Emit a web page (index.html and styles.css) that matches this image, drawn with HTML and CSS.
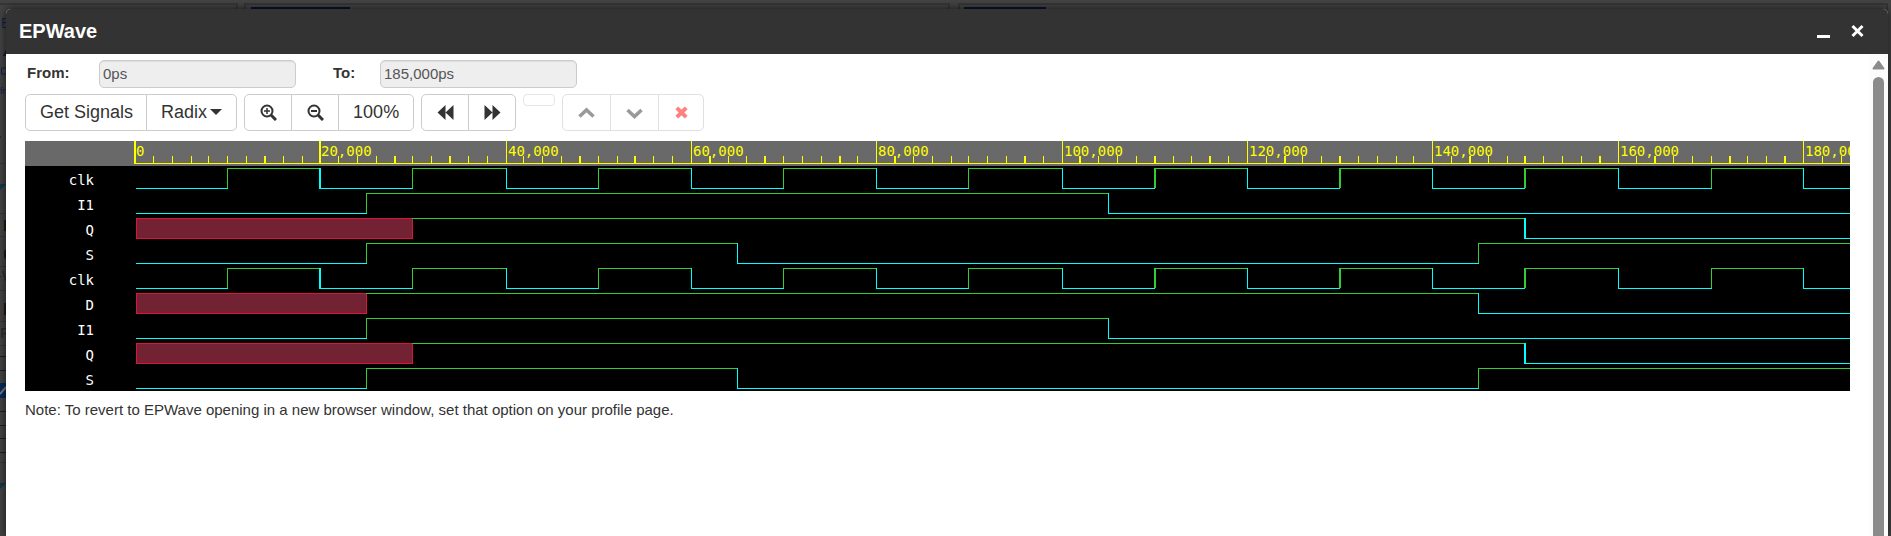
FILE: index.html
```
<!DOCTYPE html>
<html lang="en">
<head>
<meta charset="utf-8">
<title>EPWave</title>
<link rel="stylesheet" href="styles.css">
</head>
<body>
<svg class="backdrop" aria-hidden="true">
  <rect class="pane" x="-2" y="4" width="239" height="600"/>
  <rect class="pane" x="245" y="4" width="704" height="600"/>
  <rect class="pane" x="959" y="4" width="928" height="600"/>
  <path class="navy" d="M251 8h99M964 8h82"/>
  <text class="ink" x="1" y="28" font-size="14">E</text>
  <path class="inkfill" d="M3 56l4-8v8z"/>
  <path class="inkline" d="M6 68H1.500v6H6"/>
  <text class="ink" x="0" y="94" font-size="9">fr</text>
  <path class="teal" d="M0 136h1v2h-1zM0 184h6l-6 6zM0 483h6l-6 6z"/>
  <path class="rule" d="M0 163.500h6M0 213.500h6M0 236.500h6M0 266.500h6M0 290.500h6M0 321.500h6M0 345.500h6M0 462.500h6"/>
  <path class="rule dark" d="M0 356.500h6M0 370.500h6M0 411.500h6M0 425.500h6M0 438.500h6M0 452.500h6"/>
  <path class="brown" d="M4 220h2v11h-2zM4 251l2-2v11l-2-3zM4 303h2v12h-2z"/>
  <text class="grey" x="-3" y="281" font-size="15">-W</text>
  <text class="grey" x="0" y="338" font-size="15">F</text>
  <rect class="blue" x="0" y="383" width="6" height="15"/>
  <path class="tick" d="M0 394l6-7"/>
</svg>

<main class="window">
  <header class="titlebar">
    <h1 class="title">EPWave</h1>
    <button class="winbtn" type="button" aria-label="Minimize"><svg width="13" height="14" viewBox="0 0 13 14"><path d="M0 12.500h13" stroke-width="3"/></svg></button>
    <button class="winbtn" type="button" aria-label="Close"><svg width="13" height="14" viewBox="0 0 13 14"><path d="M1.500 2l10 10M11.500 2l-10 10" stroke-width="3"/></svg></button>
  </header>
  <div class="body">
    <div class="content">
      <form class="range">
        <label class="range-label" for="from">From:</label>
        <input class="range-input" id="from" type="text" value="0ps" disabled>
        <label class="range-label to" for="to">To:</label>
        <input class="range-input" id="to" type="text" value="185,000ps" disabled>
      </form>
      <div class="toolbar">
        <div class="group text">
          <button type="button" class="btn signals">Get Signals</button>
          <button type="button" class="btn">Radix<span class="caret"></span></button>
        </div>
        <div class="group text">
          <button type="button" class="btn" aria-label="Zoom in"><svg width="17" height="17" viewBox="0 0 17 17"><circle cx="7" cy="7" r="5.500"/><path d="M11 11l5 5" stroke-width="3"/><path d="M4 7h6M7 4v6" stroke-width="1.500"/></svg></button>
          <button type="button" class="btn" aria-label="Zoom out"><svg width="17" height="17" viewBox="0 0 17 17"><circle cx="7" cy="7" r="5.500"/><path d="M11 11l5 5" stroke-width="3"/><path d="M4 7h6"/></svg></button>
          <button type="button" class="btn">100%</button>
        </div>
        <div class="group">
          <button type="button" class="btn" aria-label="Scroll left"><svg width="17" height="17" viewBox="0 0 17 17"><path class="solid" d="M0.500 8.500L8.500 1v15zM8.500 8.500L16.500 1v15z"/></svg></button>
          <button type="button" class="btn" aria-label="Scroll right"><svg width="17" height="17" viewBox="0 0 17 17"><path class="solid" d="M16.500 8.500L8.500 1v15zM8.500 8.500L0.500 1v15z"/></svg></button>
        </div>
        <button type="button" class="btn blank" aria-label="Signal" disabled></button>
        <div class="group edit">
          <button type="button" class="btn" aria-label="Move up" disabled><svg width="17" height="17" viewBox="0 0 17 17"><path d="M1.500 12.500l7-6.500 7 6.500" stroke-width="3.500"/></svg></button>
          <button type="button" class="btn" aria-label="Move down" disabled><svg width="17" height="17" viewBox="0 0 17 17"><path d="M1.500 6l7 6.500 7-6.500" stroke-width="3.500"/></svg></button>
          <button type="button" class="btn" aria-label="Remove" disabled><svg class="red" width="13" height="13" viewBox="0 0 13 13"><path d="M1.800 1.800l9.400 9.400M11.200 1.800l-9.400 9.400" stroke-width="4"/></svg></button>
        </div>
      </div>
      <section class="viewer" aria-label="Waveforms">
        <ul class="names" id="names"></ul>
        <svg class="ruler" id="ruler"></svg>
        <svg class="waves" id="waves"></svg>
      </section>
      <p class="note">Note: To revert to EPWave opening in a new browser window, set that option on your profile page.</p>
    </div>
    <div class="scrollbar" aria-hidden="true">
      <svg width="13" height="10" viewBox="0 0 13 10"><path d="M6.500 1.500l5 7h-10z"/></svg>
      <div class="thumb"></div>
    </div>
  </div>
</main>
<script src="wave.js"></script>
</body>
</html>
```

FILE: styles.css
```
* { box-sizing: border-box; }

body {
  margin: 0;
  min-height: 100vh;
  display: flex;
  overflow: hidden;
  background: #434343;
  color: #333;
  font: 15px/20px "Liberation Sans", Arial, sans-serif;
}

.backdrop { position: absolute; top: 0; left: 0; width: 100%; height: 100%; }
.pane { fill: none; stroke: #363636; stroke-width: 2; }
.navy { stroke: #0a1330; stroke-width: 2; }
.ink { fill: #14204a; }
.inkfill { fill: #10183c; }
.inkline { fill: none; stroke: #14204a; }
.teal { fill: #12384a; }
.rule { stroke: #353535; }
.rule.dark { stroke: #1e1e1e; }
.brown { fill: #2a1a0c; }
.grey { fill: #262c34; }
.blue { fill: #052a5c; }
.tick { stroke: #777; stroke-width: 2; }

.window {
  position: relative;
  flex: 1;
  display: flex;
  flex-direction: column;
  margin: 9px 3px 0 6px;
  background: #fff;
  border-radius: 5px 5px 0 0;
  box-shadow: 0 0 8px #000000b0;
}

.titlebar {
  display: flex;
  align-items: center;
  gap: 21px;
  height: 45px;
  padding: 0 24px 2px 13px;
  background: #333;
  border-radius: 5px 5px 0 0;
}
.title { flex: 1; margin: 0; color: #fff; font-size: 20px; line-height: 24px; }
.winbtn { display: flex; padding: 0; border: 0; background: none; }
.winbtn svg { stroke: #fff; fill: none; }

.body { flex: 1; display: flex; }
.content { flex: 1; min-width: 0; padding: 6px 19px 0; }

.range { display: flex; align-items: center; height: 28px; }
.range-label { width: 74px; padding: 0 0 3px 2px; font-weight: bold; }
.range-label.to { width: 47px; margin-left: 37px; padding-left: 0; }
.range-input {
  width: 197px;
  height: 28px;
  padding: 0 3px 2px;
  border: 1px solid #ccc;
  border-radius: 5px;
  background: #eee;
  box-shadow: inset 0 1px 1px #00000013;
  color: #555;
  font: inherit;
}

.toolbar { display: flex; align-items: flex-start; gap: 7px; margin-top: 6px; }
.btn {
  display: flex;
  align-items: center;
  justify-content: center;
  height: 37px;
  padding: 0 15px;
  border: 1px solid #ccc;
  background: #fff;
  color: #333;
  font: 18px/24px "Liberation Sans", Arial, sans-serif;
}
.btn svg { fill: none; stroke: currentColor; stroke-width: 2; }
.btn .solid { fill: currentColor; stroke: none; }
.group { display: flex; }
.group .btn + .btn { margin-left: -1px; }
.group .btn:first-child { border-radius: 5px 0 0 5px; }
.group .btn:last-child { border-radius: 0 5px 5px 0; }
.group .btn:has(svg) { width: 48px; padding: 0; }
.group.text .btn:not(:has(svg)) { padding: 0 14px 1px; }
.group.text .signals:not(:has(svg)) { padding: 0 13px 1px 14px; }
.caret {
  margin-left: 3px;
  border: 6px solid transparent;
  border-top: 6px solid #333;
  border-bottom: 0;
}
.blank { width: 32px; height: 12px; padding: 0; border-color: #e6e6e6; border-radius: 4px; }
.edit .btn { border-color: #e0e0e0; color: #999; }
.edit .btn:has(svg) { width: 49px; }
.edit .btn:has(.red) { width: 46px; color: #ff8080; }

.viewer {
  display: grid;
  grid-template-columns: 109px 1fr;
  grid-template-rows: 25px 225px;
  margin-top: 10px;
  background: linear-gradient(#696969 25px, #000 25px);
  font: 14px/25px "DejaVu Sans Mono", monospace;
}
.names {
  grid-row: 2;
  width: 69px;
  margin: 0;
  padding: 2px 0 0;
  list-style: none;
  color: #fff;
  text-align: right;
}
.ruler, .waves { grid-column: 2; width: 100%; shape-rendering: crispEdges; overflow: hidden; }
.ruler { height: 25px; fill: #ff0; }
.waves { height: 225px; }
.high { fill: #32cd32; }
.low { fill: #0ff; }
.unknown { fill: #722233; stroke: #dc143c; }

.note { margin: 9px 0 0; }

.scrollbar {
  display: flex;
  flex-direction: column;
  align-items: center;
  gap: 7px;
  width: 19px;
  padding-top: 6px;
  background: #fcfcfc;
}
.scrollbar svg { fill: #8b8b8b; stroke: #8b8b8b; stroke-width: 2; stroke-linejoin: round; }
.thumb { flex: 1; width: 11px; border-radius: 6px 6px 0 0; background: #8b8b8b; }
```

FILE: wave.js
```
const NS = 'http://www.w3.org/2000/svg';
const ruler = document.getElementById('ruler');
const waves = document.getElementById('waves');
const names = document.getElementById('names');

const clock = [0, 'L'];
for (let t = 10000, v = 'H'; t <= 180000; t += 10000) {
  clock.push(t, v);
  v = v === 'H' ? 'L' : 'H';
}
const i1 = [0, 'L', 25000, 'H', 105000, 'L'];
const q = [0, 'X', 30000, 'H', 150000, 'L'];
const s = [0, 'L', 25000, 'H', 65000, 'L', 145000, 'H'];
const d = [0, 'X', 25000, 'H', 145000, 'L'];
const signals = [['clk', clock], ['I1', i1], ['Q', q], ['S', s],
                 ['clk', clock], ['D', d], ['I1', i1], ['Q', q], ['S', s]];

// Column and thickness of the vertical line drawn at a time.
function edge(time) {
  const c = Math.round(0.03 + 14.8312 * time / 2000);
  return { x: Math.ceil(c * 1.25), w: c % 4 === 0 ? 2 : 1 };
}

function add(parent, tag, attrs, text) {
  const el = document.createElementNS(NS, tag);
  for (const key in attrs) el.setAttribute(key, attrs[key]);
  if (text) el.textContent = text;
  parent.appendChild(el);
}

const END = 4000;

for (let k = 0; k <= 92; k++) {
  const { x, w } = edge(k * 2000);
  const major = k % 10 === 0;
  add(ruler, 'rect', { x, y: major ? 0 : 15, width: w, height: major ? 23 : 8 });
  if (major) add(ruler, 'text', { x: x + 2, y: 15 }, (k * 2000).toLocaleString('en-US'));
}
add(ruler, 'rect', { x: 0, y: 22, width: END, height: 1 });

signals.forEach(([name, data], row) => {
  const li = document.createElement('li');
  li.textContent = name;
  names.appendChild(li);
  const y = row * 25 + 2;
  for (let i = 0; i < data.length; i += 2) {
    const v = data[i + 1];
    const { x, w } = edge(data[i]);
    const start = i ? x : 2;
    const end = i + 2 < data.length ? edge(data[i + 2]).x + 1 : END;
    if (v === 'X') {
      add(waves, 'rect', { class: 'unknown', x: start + 0.5, y: y + 0.5, width: end - start - 1, height: 20 });
      continue;
    }
    const cls = v === 'H' ? 'high' : 'low';
    add(waves, 'rect', { class: cls, x: start, y: v === 'H' ? y : y + 20, width: end - start, height: 1 });
    if (i && data[i - 1] !== 'X') add(waves, 'rect', { class: cls, x, y, width: w, height: 20 });
  }
});
```
